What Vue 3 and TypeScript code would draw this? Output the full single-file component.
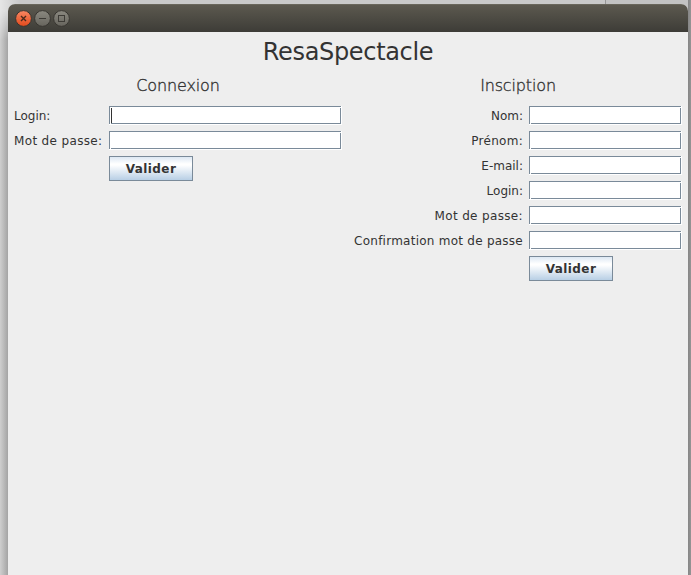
<script setup lang="ts">
import { onMounted, ref } from 'vue'

interface Field {
  id: string
  label: string
  type: 'text' | 'password'
  tracking: number
}

const loginFields: Field[] = [
  { id: 'login', label: 'Login:', type: 'text', tracking: 0 },
  { id: 'pass', label: 'Mot de passe:', type: 'password', tracking: 0.35 },
]

const signupFields: Field[] = [
  { id: 'nom', label: 'Nom:', type: 'text', tracking: 0 },
  { id: 'prenom', label: 'Prénom:', type: 'text', tracking: 0.28 },
  { id: 'email', label: 'E-mail:', type: 'text', tracking: 0 },
  { id: 'new-login', label: 'Login:', type: 'text', tracking: 0 },
  { id: 'new-pass', label: 'Mot de passe:', type: 'password', tracking: 0.35 },
  { id: 'confirm', label: 'Confirmation mot de passe', type: 'password', tracking: 0.25 },
]

const values = ref<Record<string, string>>({})
const focused = ref('')
onMounted(() => {
  focused.value = 'login'
})
</script>

<template>
  <div class="desktop">
    <div class="behind"></div>
    <main class="window">
      <header class="titlebar">
        <svg width="58" height="20" viewBox="0 0 58 20">
          <defs>
            <linearGradient id="orange" x1="0" y1="0" x2="0" y2="1">
              <stop offset="0" stop-color="#f88763" />
              <stop offset="1" stop-color="#e34a1c" />
            </linearGradient>
            <linearGradient id="grey" x1="0" y1="0" x2="0" y2="1">
              <stop offset="0" stop-color="#8b8980" />
              <stop offset="1" stop-color="#66645d" />
            </linearGradient>
          </defs>
          <circle cx="9.5" cy="10.5" r="7.9" fill="url(#orange)" stroke="#383631" />
          <circle cx="28.5" cy="10.5" r="7.9" fill="url(#grey)" stroke="#383631" />
          <circle cx="47.5" cy="10.5" r="7.9" fill="url(#grey)" stroke="#383631" />
          <path d="M7 8l5 5M12 8l-5 5" stroke="#4a2a1c" stroke-width="1.4" />
          <path d="M25 10.5h7" stroke="#3d3b36" />
          <rect x="44.5" y="7.5" width="6" height="6" fill="none" stroke="#3d3b36" />
        </svg>
      </header>
      <h1>ResaSpectacle</h1>
      <div class="panels">
        <form class="login" @submit.prevent>
          <h2>Connexion</h2>
          <div v-for="f in loginFields" :key="f.id" class="row">
            <label :for="f.id" :style="{ letterSpacing: f.tracking + 'px' }">{{ f.label }}</label>
            <div class="field">
              <span v-if="focused === f.id" class="caret"></span>
              <input :id="f.id" v-model="values[f.id]" :type="f.type" />
            </div>
          </div>
          <div class="row"><span></span><button>Valider</button></div>
        </form>
        <form class="signup" @submit.prevent>
          <h2>Insciption</h2>
          <div v-for="f in signupFields" :key="f.id" class="row">
            <label :for="f.id" :style="{ letterSpacing: f.tracking + 'px' }">{{ f.label }}</label>
            <div class="field">
              <input :id="f.id" v-model="values[f.id]" :type="f.type" />
            </div>
          </div>
          <div class="row"><span></span><button>Valider</button></div>
        </form>
      </div>
    </main>
  </div>
</template>

<style>
body {
  margin: 0;
  overflow: hidden;
}
</style>

<style scoped>
.desktop {
  position: relative;
  box-sizing: border-box;
  width: 691px;
  height: 575px;
  padding: 4px 3px 0 8px;
  overflow: hidden;
  background:
    linear-gradient(90deg, #cfcfcf, #a4a4a4 8px, transparent 8px),
    linear-gradient(90deg, transparent 688px, #858585 688px, #959595),
    #c3c3c3;
  font-family: "DejaVu Sans", sans-serif;
  color: #333;
}
.behind {
  position: absolute;
  inset: 0 85px auto 0;
  height: 40px;
  background: linear-gradient(90deg, #e6e6e6, #c9c9c9 20px);
  border-right: 1px solid #979797;
  mask-image: linear-gradient(#000 10px, transparent);
}
.window {
  position: relative;
  height: 571px;
  background: #eee;
  border-radius: 7px 7px 0 0;
  overflow: hidden;
}
.titlebar {
  display: flex;
  box-sizing: border-box;
  height: 28px;
  padding: 4px 0 0 6px;
  background: linear-gradient(#5c594f, #3d3c37);
  border-top: 1px solid #69665b;
}
.titlebar svg {
  margin-top: -1px;
}
h1, h2 {
  margin: 0;
  font-weight: 400;
  text-align: center;
  white-space: nowrap;
}
h1 {
  height: 41px;
  font-size: 24px;
  line-height: 40px;
  letter-spacing: -0.33px;
}
h2 {
  height: 33px;
  margin-bottom: -5px;
  font-size: 16px;
  font-weight: 200;
  line-height: 25px;
  letter-spacing: -0.15px;
  -webkit-text-stroke: 0.35px #333;
}
.panels {
  display: flex;
  gap: 12px;
  padding: 0 6px;
}
form {
  display: flex;
  flex-direction: column;
  gap: 5px;
}
.row {
  display: grid;
  column-gap: 6px;
}
.login .row {
  grid-template-columns: 89px 233px;
}
.signup .row {
  grid-template-columns: 169px 153px;
}
.signup label {
  text-align: right;
}
label {
  font-size: 12px;
  line-height: 20px;
  white-space: nowrap;
}
.field {
  position: relative;
  box-sizing: border-box;
  height: 19px;
  margin-bottom: 1px;
  padding: 0 1px 1px 0;
  background: #fff;
}
input {
  display: block;
  box-sizing: border-box;
  width: 100%;
  height: 18px;
  margin: 0;
  padding: 0 2px;
  border: 1px solid #7a8a99;
  border-radius: 0;
  outline: 0;
  background: #fff;
  color: #333;
  font: 12px "DejaVu Sans", sans-serif;
}
.field::before,
.field::after {
  content: "";
  position: absolute;
  width: 1px;
  height: 1px;
  background: #fff;
}
.field::before {
  left: 1px;
  bottom: 1px;
}
.field::after {
  right: 1px;
  top: 1px;
}
.caret {
  position: absolute;
  left: 2px;
  top: 2px;
  width: 1px;
  height: 15px;
  background: #333;
}
button {
  box-sizing: border-box;
  width: 84px;
  height: 25px;
  padding: 0;
  border: 1px solid #7a8a99;
  border-radius: 0;
  background: linear-gradient(#dde8f3, #fff 30%, #fff 35%, #b8cfe5);
  color: #333;
  font: bold 12px "DejaVu Sans", sans-serif;
  letter-spacing: 0.4px;
}
</style>
